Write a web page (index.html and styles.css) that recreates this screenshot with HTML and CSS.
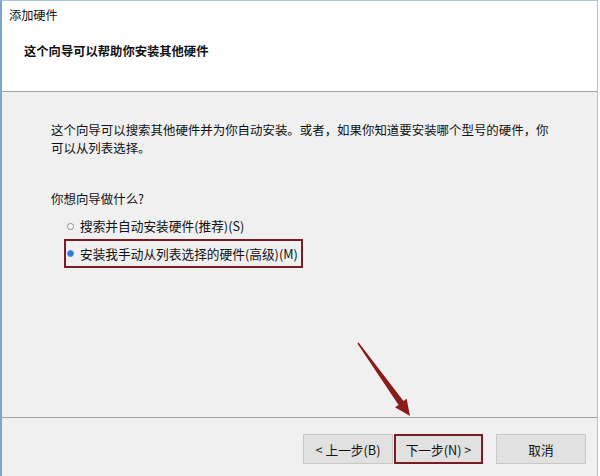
FILE: index.html
```html
<!DOCTYPE html>
<html>
<head>
  <meta charset="utf-8">
  <title>添加硬件</title>
  <link rel="stylesheet" href="styles.css">
</head>
<body>
  <div class="window">
    <div class="header">
      <div class="title">添加硬件</div>
      <div class="heading">这个向导可以帮助你安装其他硬件</div>
    </div>
    <div class="content">
      <p class="intro">这个向导可以搜索其他硬件并为你自动安装。或者，如果你知道要安装哪个型号的硬件，你<br>可以从列表选择。</p>
      <p class="question">你想向导做什么?</p>
      <div class="options">
        <label class="option"><span class="radio"></span>搜索并自动安装硬件(推荐)(S)</label>
        <label class="option marked"><span class="radio checked"></span>安装我手动从列表选择的硬件(高级)(M)</label>
      </div>
    </div>
    <div class="footer">
      <span class="button">&lt; 上一步(B)</span>
      <span class="button marked-button">下一步(N) &gt;</span>
      <span class="button cancel">取消</span>
    </div>
    <!-- arrow pointing at the next button -->
    <svg class="arrow" width="600" height="476" viewBox="0 0 600 476">
      <polygon points="358.6,342.6 403.5,401 406.6,398.8 410,416 395,407.2 398.6,405 357.4,343.4" fill="#8a1b1b"/>
    </svg>
  </div>
</body>
</html>
```

FILE: styles.css
```css
body {
  margin: 0;
  background: #ffffff;
  font: 12.45px "Noto Sans CJK SC", "Microsoft YaHei", sans-serif;
  color: #111111;
}
.window {
  position: relative;
  box-sizing: border-box;
  width: 598px;
  height: 476px;
  border-left: 2px solid #7ca6cc;
  border-right: 1px solid #a8c6e2;
  border-top: 1px solid #a8c6e2;
  display: flex;
  flex-direction: column;
  overflow: hidden;
}
.header {
  height: 91px;
  background: #ffffff;
  border-bottom: 1px solid #a0a0a0;
  box-sizing: border-box;
  padding: 5px 0 0 7px;
}
.title {
  line-height: 18px;
  font-size: 12.2px;
}
.heading {
  margin: 18px 0 0 15px;
  line-height: 18px;
  font-size: 12.3px;
  font-weight: bold;
}
.content {
  flex: 1;
  background: #f0f0f0;
  padding: 29px 0 0 49px;
}
.intro {
  margin: 0;
  line-height: 18px;
}
.question {
  margin: 33px 0 0;
  line-height: 18px;
}
.options {
  margin: 8px 0 0 13px;
  display: flex;
  flex-direction: column;
  align-items: flex-start;
  gap: 3px;
  font-size: 12.7px;
}
.option {
  display: flex;
  align-items: center;
  gap: 6px;
  border: 2px solid transparent;
  padding: 0 3px 0 1px;
  line-height: 16px;
}
.option.marked {
  border-color: #7b1c22;
  line-height: 25px;
}
.radio {
  width: 5px;
  height: 5px;
  border: 1px solid #8a8a8a;
  border-radius: 50%;
  background: #ffffff;
}
.radio.checked {
  border-color: #4a90d9;
  background: #2b7bd4;
}
.footer {
  height: 59px;
  box-sizing: border-box;
  background: #f0f0f0;
  border-top: 1px solid #a0a0a0;
  display: flex;
  justify-content: flex-end;
  align-items: flex-start;
  padding: 16px 11px 0 0;
}
.button {
  box-sizing: border-box;
  width: 90px;
  height: 30px;
  border: 1px solid #c8c8c8;
  background: #e1e1e1;
  display: flex;
  align-items: center;
  justify-content: center;
  font-size: 12.7px;
}
.marked-button {
  margin-left: 1px;
  border: 2px solid #7b1c22;
  width: 89px;
}
.cancel {
  margin-left: 13px;
}
.arrow {
  position: absolute;
  left: -2px;
  top: -1px;
  pointer-events: none;
}
```
